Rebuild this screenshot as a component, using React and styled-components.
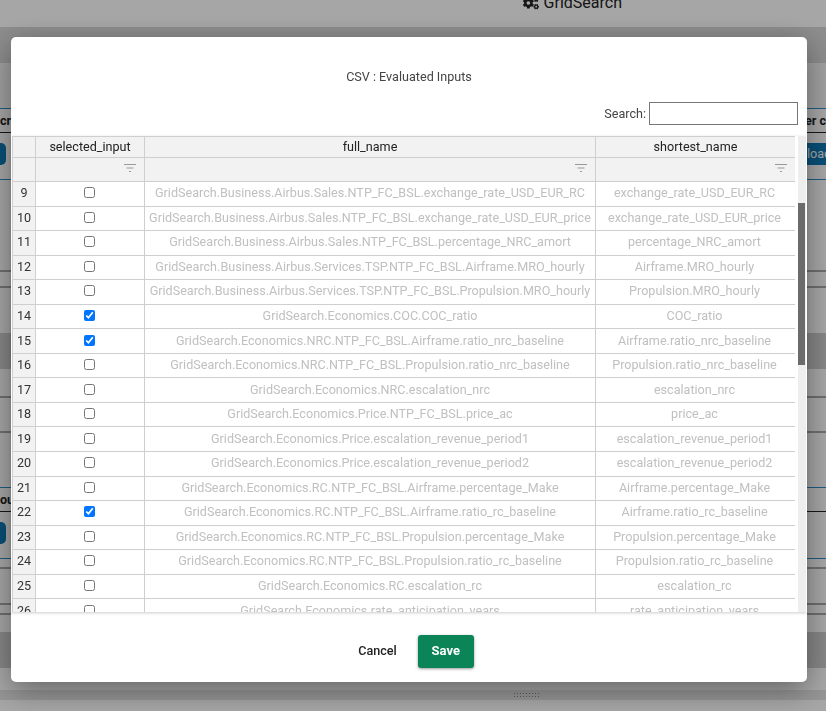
import React from 'react'
import styled, { createGlobalStyle } from 'styled-components'
import { FaCogs } from 'react-icons/fa'

const rows = [
  { n: 9, full: 'GridSearch.Business.Airbus.Sales.NTP_FC_BSL.exchange_rate_USD_EUR_RC', short: 'exchange_rate_USD_EUR_RC' },
  { n: 10, full: 'GridSearch.Business.Airbus.Sales.NTP_FC_BSL.exchange_rate_USD_EUR_price', short: 'exchange_rate_USD_EUR_price' },
  { n: 11, full: 'GridSearch.Business.Airbus.Sales.NTP_FC_BSL.percentage_NRC_amort', short: 'percentage_NRC_amort' },
  { n: 12, full: 'GridSearch.Business.Airbus.Services.TSP.NTP_FC_BSL.Airframe.MRO_hourly', short: 'Airframe.MRO_hourly' },
  { n: 13, full: 'GridSearch.Business.Airbus.Services.TSP.NTP_FC_BSL.Propulsion.MRO_hourly', short: 'Propulsion.MRO_hourly' },
  { n: 14, full: 'GridSearch.Economics.COC.COC_ratio', short: 'COC_ratio', checked: true },
  { n: 15, full: 'GridSearch.Economics.NRC.NTP_FC_BSL.Airframe.ratio_nrc_baseline', short: 'Airframe.ratio_nrc_baseline', checked: true },
  { n: 16, full: 'GridSearch.Economics.NRC.NTP_FC_BSL.Propulsion.ratio_nrc_baseline', short: 'Propulsion.ratio_nrc_baseline' },
  { n: 17, full: 'GridSearch.Economics.NRC.escalation_nrc', short: 'escalation_nrc' },
  { n: 18, full: 'GridSearch.Economics.Price.NTP_FC_BSL.price_ac', short: 'price_ac' },
  { n: 19, full: 'GridSearch.Economics.Price.escalation_revenue_period1', short: 'escalation_revenue_period1' },
  { n: 20, full: 'GridSearch.Economics.Price.escalation_revenue_period2', short: 'escalation_revenue_period2' },
  { n: 21, full: 'GridSearch.Economics.RC.NTP_FC_BSL.Airframe.percentage_Make', short: 'Airframe.percentage_Make' },
  { n: 22, full: 'GridSearch.Economics.RC.NTP_FC_BSL.Airframe.ratio_rc_baseline', short: 'Airframe.ratio_rc_baseline', checked: true },
  { n: 23, full: 'GridSearch.Economics.RC.NTP_FC_BSL.Propulsion.percentage_Make', short: 'Propulsion.percentage_Make' },
  { n: 24, full: 'GridSearch.Economics.RC.NTP_FC_BSL.Propulsion.ratio_rc_baseline', short: 'Propulsion.ratio_rc_baseline' },
  { n: 25, full: 'GridSearch.Economics.RC.escalation_rc', short: 'escalation_rc' },
  { n: 26, full: 'GridSearch.Economics.rate_anticipation_years', short: 'rate_anticipation_years' },
]

const GlobalStyle = createGlobalStyle`
html, body {
  margin: 0;
  height: 100%;
  overflow: hidden;
  background: #fff;
  font-family: Roboto, "Liberation Sans", sans-serif;
}
`

// page behind the dialog
const Page = styled.div`
height: 711px;
overflow: hidden;
display: flex;
flex-direction: column;
`
const TopBar = styled.div`
flex: none;
box-sizing: border-box;
margin-top: -7px;
height: 34px;
display: flex;
justify-content: flex-end;
align-items: flex-start;
padding-right: 204px;
gap: 5px;
font-size: 16px;
color: #222;
line-height: 19px;
background: #fff;
svg {
  margin-top: 2px;
}
`
const PageBand = styled.div`
height: ${p => p.$h}px;
flex: none;
box-sizing: border-box;
background: ${p => p.$bg || '#fff'};
border-bottom: ${p => p.$line ? '2px solid #aaa' : 'none'};
`
const GripBand = styled(PageBand)`
padding: 2px 0 0 513px;
`
const Grip = styled.div`
width: 27px;
height: 6px;
background-image: radial-gradient(circle, #8a8a8a 1px, transparent 1px);
background-size: 3px 3px;
`
const ToolRow = styled.div`
height: 72px;
flex: none;
box-sizing: border-box;
display: flex;
flex-direction: column;
border-top: 1px solid #2d8fc9;
border-bottom: 1px solid #2d8fc9;
background: #fff;
`
const ToolHead = styled.div`
height: 23px;
flex: none;
display: flex;
justify-content: space-between;
align-items: center;
font-size: 12.6px;
font-weight: 700;
color: #222;
border-bottom: 1px solid #222;
white-space: nowrap;
`
const ToolFoot = styled.div`
height: 22px;
margin-top: 10px;
display: flex;
justify-content: space-between;
`
const ToolButton = styled.div`
width: ${p => p.$w}px;
background: #0f79b7;
border-radius: ${p => p.$right ? '0' : '0 5px 5px 0'};
color: #fff;
font-size: 12.6px;
line-height: 22px;
text-indent: 3px;
overflow: hidden;
white-space: nowrap;
`

const Overlay = styled.div`
position: fixed;
inset: 0;
background: rgba(0, 0, 0, 0.35);
`
const Dialog = styled.div`
position: fixed;
left: 11px;
top: 37px;
width: 796px;
height: 645px;
background: #fff;
border-radius: 5px;
box-shadow: 0 8px 30px rgba(0, 0, 0, 0.4);
display: flex;
flex-direction: column;
`
const Title = styled.div`
height: 65px;
flex: none;
display: flex;
align-items: center;
justify-content: center;
padding-top: 15px;
box-sizing: border-box;
font-size: 12.6px;
line-height: 16px;
color: #444;
`
const SearchRow = styled.div`
height: 34px;
flex: none;
display: flex;
justify-content: flex-end;
align-items: flex-start;
gap: 3px;
padding-right: 9px;
font-size: 12.6px;
color: #444;
`
const SearchLabel = styled.label`
line-height: 24px;
`
const SearchInput = styled.input`
width: 149px;
height: 23px;
box-sizing: border-box;
border: 1px solid #767676;
border-radius: 0;
outline: none;
padding: 0 2px;
`
const Body = styled.div`
height: 476px;
flex: none;
display: flex;
padding-left: 1px;
box-shadow: 0 1px 3px rgba(0, 0, 0, 0.2);
overflow: hidden;
`
const TableWrap = styled.div`
width: 783px;
flex: none;
overflow: hidden;
`
const Table = styled.table`
width: 783px;
border-collapse: collapse;
table-layout: fixed;
font-size: 12.6px;
color: #333;
`
const HeadCell = styled.th`
height: 18px;
padding: 0 0 2px;
background: #f2f2f2;
border: 1px solid #cfcfcf;
font-weight: 400;
text-align: center;
color: #222;
`
const FilterCell = styled.th`
height: 23px;
padding: 0 7px 0 0;
background: #f2f2f2;
border: 1px solid #cfcfcf;
text-align: right;
`
const FilterIcon = styled.svg`
display: block;
margin: 0 0 4px auto;
width: 14px;
height: 10px;
`
const Row = styled.tr`
height: 24.55px;
`
const IndexCell = styled.td`
padding: 0 0 2px;
background: #f2f2f2;
border: 1px solid #cfcfcf;
text-align: center;
color: #333;
`
const Cell = styled.td`
padding: 0 0 2px;
border: 1px solid #cfcfcf;
text-align: center;
color: #c0c0c0;
white-space: nowrap;
overflow: hidden;
&:last-child {
  padding-right: 2px;
}
`
const CheckCell = styled(Cell)`
padding: 0 1px 2px 0;
`
const Check = styled.input`
display: block;
margin: 0 auto;
width: 11px;
height: 11px;
`
const Track = styled.div`
width: 8px;
margin-left: 3px;
flex: none;
background: #eee;
padding-top: 67px;
`
const Thumb = styled.div`
width: 7px;
height: 162px;
background: #6b6b6b;
`
const Footer = styled.div`
flex: 1;
display: flex;
justify-content: center;
align-items: flex-start;
padding: 23px 0 0 14px;
gap: 21px;
`
const CancelButton = styled.button`
height: 33px;
border: none;
background: none;
padding: 0 0 2px;
font: 500 12.6px Roboto, sans-serif;
color: #222;
`
const SaveButton = styled.button`
width: 56px;
height: 33px;
border: none;
border-radius: 3px;
background: #0b8457;
color: #fff;
padding: 0 0 2px;
font: 700 13px Roboto, sans-serif;
box-shadow: 0 1px 3px rgba(0, 0, 0, 0.4);
`

function FilterGlyph() {
  return (
    <FilterIcon viewBox="0 0 14 10">
      <path d="M1 1.5h12M3.5 5h7M6 8.5h2" stroke="#9a9a9a" strokeWidth="1.2" fill="none" />
    </FilterIcon>
  )
}

export default function App() {
  return (
    <>
      <GlobalStyle />
      <Page>
        <TopBar><FaCogs size={16} /><span>GridSearch</span></TopBar>
        <PageBand $h={36} $bg="#d8d8d8" />
        <PageBand $h={45} $bg="#f6f6f6" />
        <ToolRow>
          <ToolHead><span>cra</span><span>ber c</span></ToolHead>
          <ToolFoot>
            <ToolButton $w={6} />
            <ToolButton $w={22} $right>load</ToolButton>
          </ToolFoot>
        </ToolRow>
        <PageBand $h={92} $line />
        <PageBand $h={16} $line />
        <PageBand $h={45} />
        <PageBand $h={36} $bg="#cfcfcf" />
        <PageBand $h={29} $line />
        <PageBand $h={35} $line />
        <PageBand $h={54} />
        <ToolRow>
          <ToolHead><span>out</span></ToolHead>
          <ToolFoot>
            <ToolButton $w={6} />
          </ToolFoot>
        </ToolRow>
        <PageBand $h={10} $line />
        <PageBand $h={36} $line />
        <PageBand $h={10} $line />
        <PageBand $h={17} />
        <PageBand $h={36} $bg="#cfcfcf" />
        <PageBand $h={22} />
        <GripBand $h={10} $bg="#e6e6e6"><Grip /></GripBand>
        <PageBand $h={13} />
      </Page>
      <Overlay />
      <Dialog>
        <Title>CSV : Evaluated Inputs</Title>
        <SearchRow>
          <SearchLabel htmlFor="search">Search:</SearchLabel>
          <SearchInput id="search" />
        </SearchRow>
        <Body>
          <TableWrap>
            <Table>
              <colgroup>
                <col width="23" />
                <col width="109" />
                <col width="451" />
                <col width="200" />
              </colgroup>
              <thead>
                <tr>
                  <HeadCell />
                  <HeadCell>selected_input</HeadCell>
                  <HeadCell>full_name</HeadCell>
                  <HeadCell>shortest_name</HeadCell>
                </tr>
                <tr>
                  <FilterCell />
                  <FilterCell><FilterGlyph /></FilterCell>
                  <FilterCell><FilterGlyph /></FilterCell>
                  <FilterCell><FilterGlyph /></FilterCell>
                </tr>
              </thead>
              <tbody>
                {rows.map(r => (
                  <Row key={r.n}>
                    <IndexCell>{r.n}</IndexCell>
                    <CheckCell><Check type="checkbox" defaultChecked={!!r.checked} /></CheckCell>
                    <Cell>{r.full}</Cell>
                    <Cell>{r.short}</Cell>
                  </Row>
                ))}
              </tbody>
            </Table>
          </TableWrap>
          <Track><Thumb /></Track>
        </Body>
        <Footer>
          <CancelButton>Cancel</CancelButton>
          <SaveButton>Save</SaveButton>
        </Footer>
      </Dialog>
    </>
  )
}
